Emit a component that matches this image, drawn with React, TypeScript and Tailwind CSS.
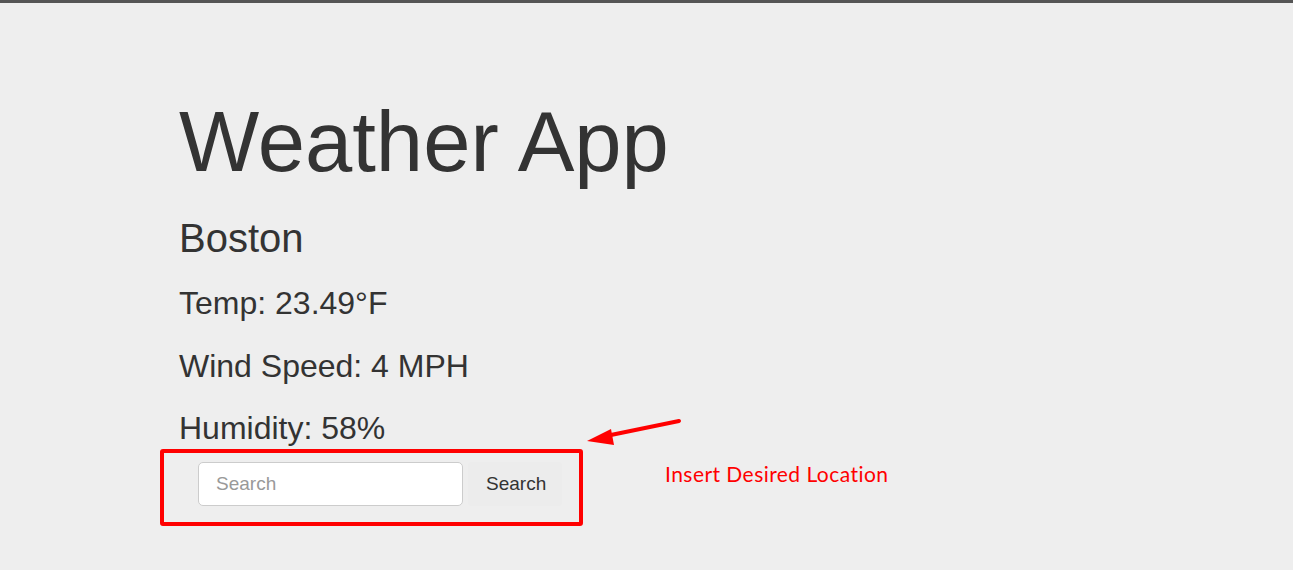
import React from 'react'

const stats = [
  { label: 'Temp', value: '23.49°F' },
  { label: 'Wind Speed', value: '4 MPH' },
  { label: 'Humidity', value: '58%' },
]

const App = () => {
  return (
    <div className="relative h-[570px] overflow-hidden bg-[#eeeeee] border-t-[3px] border-[#555555] font-['Liberation_Sans',Arial,sans-serif] text-[#333333]">
      <div className="pl-[179px] pt-[93px]">
        <h1 className="text-[85px] leading-[92px]">Weather App</h1>
        <h3 className="mt-[28px] text-[40px] leading-[44px]">Boston</h3>
        <div className="mt-[12px] flex flex-col">
          {stats.map((s) => (
            <p key={s.label} className="text-[32px] leading-[62.5px]">
              {s.label}: {s.value}
            </p>
          ))}
        </div>

        {/* search form */}
        <form className="mt-[2.5px] ml-[19px] flex items-center gap-[5px]">
          <input
            type="text"
            placeholder="Search"
            className="w-[265px] h-[44px] rounded-[5px] border border-[#cccccc] bg-white pl-[17px] text-[19px] text-[#555555] placeholder:text-[#999999] outline-none"
          />
          <button type="button" className="h-[44px] w-[94px] rounded-[4px] bg-[#ececec] pl-[18px] text-left text-[19px] text-[#333333]">
            Search
          </button>
        </form>
      </div>

      {/* annotation overlay */}
      <div className="absolute left-[160px] top-[446px] w-[423px] h-[77px] border-[4px] border-[#ff0000] rounded-[3px]" />
      <svg className="absolute left-0 top-0" width="1293" height="570" viewBox="0 0 1293 570">
        <line x1="679" y1="418" x2="606" y2="433" stroke="#ff0000" strokeWidth="4" strokeLinecap="round" />
        <polygon points="587,438 611,426 614,442" fill="#ff0000" />
      </svg>
      <span className="absolute left-[665px] top-[459px] text-[21px] leading-[24px] text-[#ff0000] font-['Lato',sans-serif] tracking-[0.45px]">
        Insert Desired Location
      </span>
    </div>
  )
}

export default App
